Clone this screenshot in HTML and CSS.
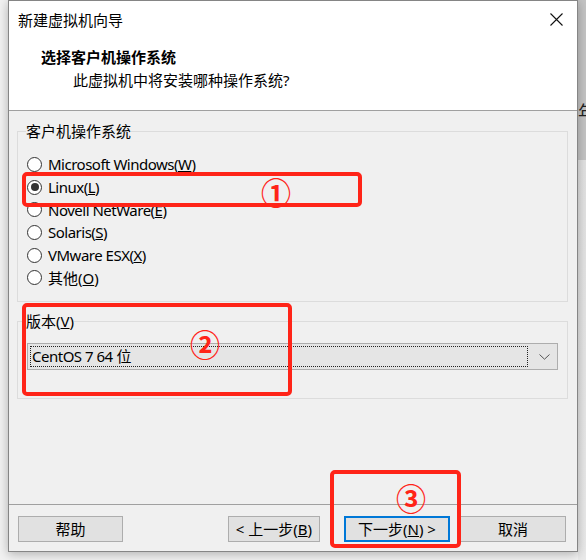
FILE: index.html
```html
<!DOCTYPE html>
<html lang="zh-CN">
<head>
<meta charset="utf-8">
<title>新建虚拟机向导</title>
<link rel="stylesheet" href="styles.css">
</head>
<body>
<div class="stage">
  <div class="window">
    <div class="header">
      <div class="titlebar">
        <span class="title">新建虚拟机向导</span>
        <svg class="close" width="13" height="13" viewBox="0 0 13 13"><path d="M0.5 0.5 L12.5 12.5 M12.5 0.5 L0.5 12.5" stroke="#111" stroke-width="1.1" fill="none"/></svg>
      </div>
      <div class="head-title">选择客户机操作系统</div>
      <div class="head-sub">此虚拟机中将安装哪种操作系统?</div>
    </div>
    <div class="body">
      <fieldset class="group group-os">
        <legend>客户机操作系统</legend>
        <div class="radios">
          <div class="radio-row"><span class="radio"></span><span class="lat">Microsoft Windows(<u>W</u>)</span></div>
          <div class="radio-row"><span class="radio checked"></span><span class="lat">Linux(<u>L</u>)</span></div>
          <div class="radio-row"><span class="radio"></span><span class="lat">Novell NetWare(<u>E</u>)</span></div>
          <div class="radio-row"><span class="radio"></span><span class="lat">Solaris(<u>S</u>)</span></div>
          <div class="radio-row"><span class="radio"></span><span class="lat">VMware ESX(<u>X</u>)</span></div>
          <div class="radio-row"><span class="radio"></span><span>其他(<u>O</u>)</span></div>
        </div>
      </fieldset>
      <fieldset class="group group-ver">
        <legend>版本(<u>V</u>)</legend>
        <div class="combo">
          <div class="combo-value"><span class="lat">CentOS 7 64</span> 位</div>
          <svg class="chev" width="11" height="6" viewBox="0 0 11 6"><path d="M0.5 0.5 L5.5 5.2 L10.5 0.5" stroke="#555" stroke-width="1" fill="none"/></svg>
        </div>
      </fieldset>
    </div>
    <div class="footer">
      <button class="btn btn-help">帮助</button>
      <div class="nav">
        <button class="btn btn-prev">&lt; 上一步(<u>B</u>)</button>
        <button class="btn btn-next">下一步(<u>N</u>) &gt;</button>
        <button class="btn btn-cancel">取消</button>
      </div>
    </div>
    <div class="mark mark1"></div>
    <div class="mark mark2"></div>
    <div class="mark mark3"></div>
    <span class="num num1">①</span>
    <span class="num num2">②</span>
    <span class="num num3">③</span>
  </div>
  <div class="behind"><span class="behind-char">年</span></div>
</div>
</body>
</html>
```

FILE: styles.css
```css
* { box-sizing: border-box; }
html, body { margin: 0; padding: 0; }
body {
  width: 586px;
  height: 560px;
  overflow: hidden;
  background: #ececec;
  font-family: "Noto Sans", "Noto Sans CJK SC", sans-serif;
  font-size: 15px;
  color: #000;
}
.stage {
  display: flex;
  padding-left: 8px;
  height: 560px;
  background: #f2f2f2;
}
.window {
  position: relative;
  width: 570px;
  height: 552px;
  border: 1px solid #858585;
  background: #f0f0f0;
  display: flex;
  flex-direction: column;
  box-shadow: 0 2px 10px rgba(0,0,0,0.28);
  z-index: 1;
}
.header {
  background: #fff;
  height: 110px;
  border-bottom: 1px solid #a0a0a0;
  flex: none;
}
.titlebar {
  height: 38px;
  display: flex;
  align-items: center;
  justify-content: space-between;
  padding: 0 14px 0 9px;
}
.title { line-height: 20px; }
.close { display: block; margin-top: -1px; }
.head-title {
  margin-top: 8px;
  padding-left: 32px;
  font-weight: bold;
  line-height: 20px;
}
.head-sub {
  margin-top: 3px;
  padding-left: 64px;
  line-height: 20px;
}
.lat { letter-spacing: -0.5px; }
.body {
  flex: 1;
  display: flex;
  flex-direction: column;
}
.group {
  margin: 0 9px 0 8px;
  border: 1px solid #dcdcdc;
  padding: 0 9px;
  min-width: 0;
}
.group legend {
  padding: 0;
  margin-left: -1px;
  line-height: 20px;
  height: 20px;
}
.group-os {
  margin-top: 10px;
  height: 181px;
  padding-top: 12px;
}
.radios { display: flex; flex-direction: column; }
.radio-row {
  display: flex;
  align-items: center;
  height: 22.7px;
  line-height: 20px;
  gap: 6px;
}
.radio {
  width: 15px;
  height: 15px;
  border: 1px solid #333;
  border-radius: 50%;
  background: #fff;
  flex: none;
  display: flex;
  align-items: center;
  justify-content: center;
}
.radio.checked::after {
  content: "";
  width: 8px;
  height: 8px;
  border-radius: 50%;
  background: #333;
}
.group-ver {
  margin-top: 9px;
  height: 88px;
  padding-top: 12px;
}
.combo {
  height: 27px;
  border: 1px solid #adadad;
  background: #e5e5e5;
  display: flex;
  align-items: center;
  padding: 2px;
  gap: 11px;
}
.combo-value {
  flex: 1;
  height: 21px;
  border: 1px dotted #222;
  line-height: 19px;
  padding-left: 1px;
}
.chev { display: block; margin-right: 5px; }
.footer {
  flex: none;
  border-top: 1px solid #a0a0a0;
  height: 47px;
  padding: 11px 11px 9px 9px;
  display: flex;
  justify-content: space-between;
}
.nav { display: flex; }
.btn {
  font: inherit;
  color: #000;
  height: 26px;
  border: 1px solid #adadad;
  background: #e1e1e1;
  padding: 0;
  line-height: 22px;
  text-align: center;
}
.btn-help { width: 105px; }
.btn-prev { width: 92px; }
.btn-next { width: 106px; margin-left: 24px; border: 2px solid #0078d7; }
.btn-cancel { width: 106px; margin-left: 10px; }

.mark {
  position: absolute;
  border: 4px solid #ff2418;
  border-radius: 5px;
  z-index: 3;
}
.mark1 { left: 13px; top: 171px; width: 340px; height: 35px; }
.mark2 { left: 13px; top: 302px; width: 270px; height: 93px; }
.mark3 { left: 321px; top: 469px; width: 131px; height: 78px; }
.num {
  position: absolute;
  color: #ff2418;
  font-family: "Noto Sans CJK SC", sans-serif;
  font-weight: bold;
  font-size: 30px;
  line-height: 30px;
  width: 30px;
  text-align: center;
  z-index: 3;
}
.num1 { left: 252px; top: 175px; }
.num2 { left: 181px; top: 327px; }
.num3 { left: 387px; top: 481px; }

.behind {
  flex: 1;
  overflow: hidden;
  height: 560px;
  background: linear-gradient(#c4c4c4 0, #c4c4c4 160px, #e2e2e2 160px, #eaeaea 100%);
}
.behind-char {
  display: block;
  margin-top: 101px;
  font-family: "Noto Sans CJK SC", sans-serif;
  font-size: 18px;
  line-height: 20px;
  color: #222;
}
```
